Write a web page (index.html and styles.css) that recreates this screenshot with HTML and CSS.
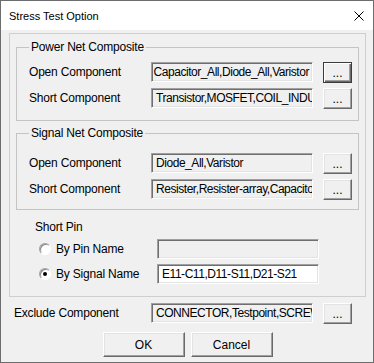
FILE: index.html
```html
<!DOCTYPE html>
<html>

<head>
    <title>Stress Test Option</title>
    <link rel="stylesheet" href="styles.css">
</head>

<body>
    <div class="window">
        <div class="titlebar">
            <span class="title">Stress Test Option</span>
            <svg class="close" width="10" height="10" viewBox="0 0 10 10">
                <path d="M0.5 0.5 L9.5 9.5 M9.5 0.5 L0.5 9.5" stroke="#000" stroke-width="1" fill="none" />
            </svg>
        </div>
        <div class="content">
            <div class="panel">
                <fieldset class="group power">
                    <legend>Power Net Composite</legend>
                    <div class="row">
                        <span class="label">Open Component</span>
                        <div class="field scrolled"><span>Capacitor_All,Diode_All,Varistor</span></div>
                        <button class="browse default">...</button>
                    </div>
                    <div class="row">
                        <span class="label">Short Component</span>
                        <div class="field"><span>Transistor,MOSFET,COIL_INDU</span></div>
                        <button class="browse">...</button>
                    </div>
                </fieldset>
                <fieldset class="group signal">
                    <legend>Signal Net Composite</legend>
                    <div class="row">
                        <span class="label">Open Component</span>
                        <div class="field"><span>Diode_All,Varistor</span></div>
                        <button class="browse">...</button>
                    </div>
                    <div class="row">
                        <span class="label">Short Component</span>
                        <div class="field"><span>Resister,Resister-array,Capacito</span></div>
                        <button class="browse">...</button>
                    </div>
                </fieldset>
                <div class="short-pin">
                    <div class="caption">Short Pin</div>
                    <div class="radio-row">
                        <span class="radio"></span>
                        <span class="radio-label">By Pin Name</span>
                        <div class="field"></div>
                    </div>
                    <div class="radio-row">
                        <span class="radio checked"></span>
                        <span class="radio-label">By Signal Name</span>
                        <div class="field editable"><span>E11-C11,D11-S11,D21-S21</span></div>
                    </div>
                </div>
            </div>
            <div class="row exclude">
                <span class="label">Exclude Component</span>
                <div class="field"><span>CONNECTOR,Testpoint,SCREW</span></div>
                <button class="browse">...</button>
            </div>
            <div class="actions">
                <button class="action">OK</button>
                <button class="action">Cancel</button>
            </div>
        </div>
    </div>
</body>

</html>
```

FILE: styles.css
```css
/* base */
* {
    box-sizing: border-box;
}

body {
    margin: 0;
    font-family: "Liberation Sans", Arial, sans-serif;
    font-size: 12px;
    color: #000;
    letter-spacing: -0.2px;
}

/* window frame */
.window {
    width: 374px;
    height: 363px;
    border: 1px solid #6d6d6d;
    background: #f0f0f0;
    display: flex;
    flex-direction: column;
}

.titlebar {
    height: 29px;
    flex-shrink: 0;
    background: #fff;
    display: flex;
    align-items: center;
    justify-content: space-between;
    padding: 0 9px 0 8px;
}

.title {
    font-size: 11px;
    letter-spacing: 0;
}

.close {
    display: block;
}

.content {
    padding: 3px 7px 0 8px;
}

/* outer panel and group boxes */
.panel {
    border: 1px solid #cfcfcf;
    padding: 6px 6px 12px 6px;
}

.group {
    margin: 0;
    min-width: 0;
    border: 1px solid #c4c4c4;
    padding: 7px 6px 11px 12px;
}

.group legend {
    padding: 0 2px;
    line-height: 15px;
}

.group.signal {
    margin-top: 5px;
    padding-top: 12px;
    padding-bottom: 9px;
}

.row {
    display: flex;
    align-items: flex-start;
    height: 21px;
}

.row + .row {
    margin-top: 5px;
}

.row .label {
    width: 122px;
    line-height: 20px;
}

/* text fields */
.field {
    width: 162px;
    height: 20px;
    background: #f0f0f0;
    border: 1px solid;
    border-color: #a0a0a0 #fff #fff #a0a0a0;
    box-shadow: inset 1px 1px 0 #6f6f6f, inset -1px -1px 0 #e3e3e3;
    padding: 0 3px 0 4px;
    line-height: 18px;
    letter-spacing: -0.45px;
    white-space: nowrap;
    overflow: hidden;
    display: flex;
}

.field.scrolled {
    justify-content: flex-end;
    padding-left: 2px;
}

.field.editable {
    background: #fff;
}

/* buttons */
.browse,
.action {
    font-family: inherit;
    font-size: 12px;
    color: #000;
    background: #f0f0f0;
    border: 1px solid;
    border-color: #fff #696969 #696969 #fff;
    box-shadow: inset -1px -1px 0 #a0a0a0, inset 1px 1px 0 #e3e3e3;
    padding: 0;
    margin: 0;
}

.browse {
    width: 29px;
    height: 21px;
    margin-left: 10px;
    line-height: 18px;
}

.browse.default {
    border-color: #3c3c3c;
    box-shadow: inset 1px 1px 0 #fff, inset -1px -1px 0 #696969, inset -2px -2px 0 #a0a0a0;
}

/* short pin radios */
.short-pin {
    margin-top: 10px;
}

.caption {
    padding-left: 19px;
    line-height: 15px;
}

.radio-row {
    display: flex;
    align-items: center;
    height: 20px;
    padding-left: 23px;
    margin-top: 4px;
}

.radio-row + .radio-row {
    margin-top: 5px;
}

.radio {
    width: 12px;
    height: 12px;
    border-radius: 50%;
    border: 1px solid;
    border-color: #a0a0a0 #fff #fff #a0a0a0;
    box-shadow: inset 1px 1px 0 #8a8a8a;
    background: #fff;
    position: relative;
}

.radio.checked::after {
    content: "";
    position: absolute;
    left: 3px;
    top: 3px;
    width: 4px;
    height: 4px;
    border-radius: 50%;
    background: #000;
}

.radio-label {
    width: 101px;
    margin-left: 5px;
}

/* bottom area */
.row.exclude {
    margin-top: 6px;
    margin-left: 5px;
}

.exclude .label {
    width: 137px;
}

.actions {
    display: flex;
    justify-content: center;
    gap: 6px;
    margin-top: 8px;
}

.action {
    width: 82px;
    height: 25px;
}
```
